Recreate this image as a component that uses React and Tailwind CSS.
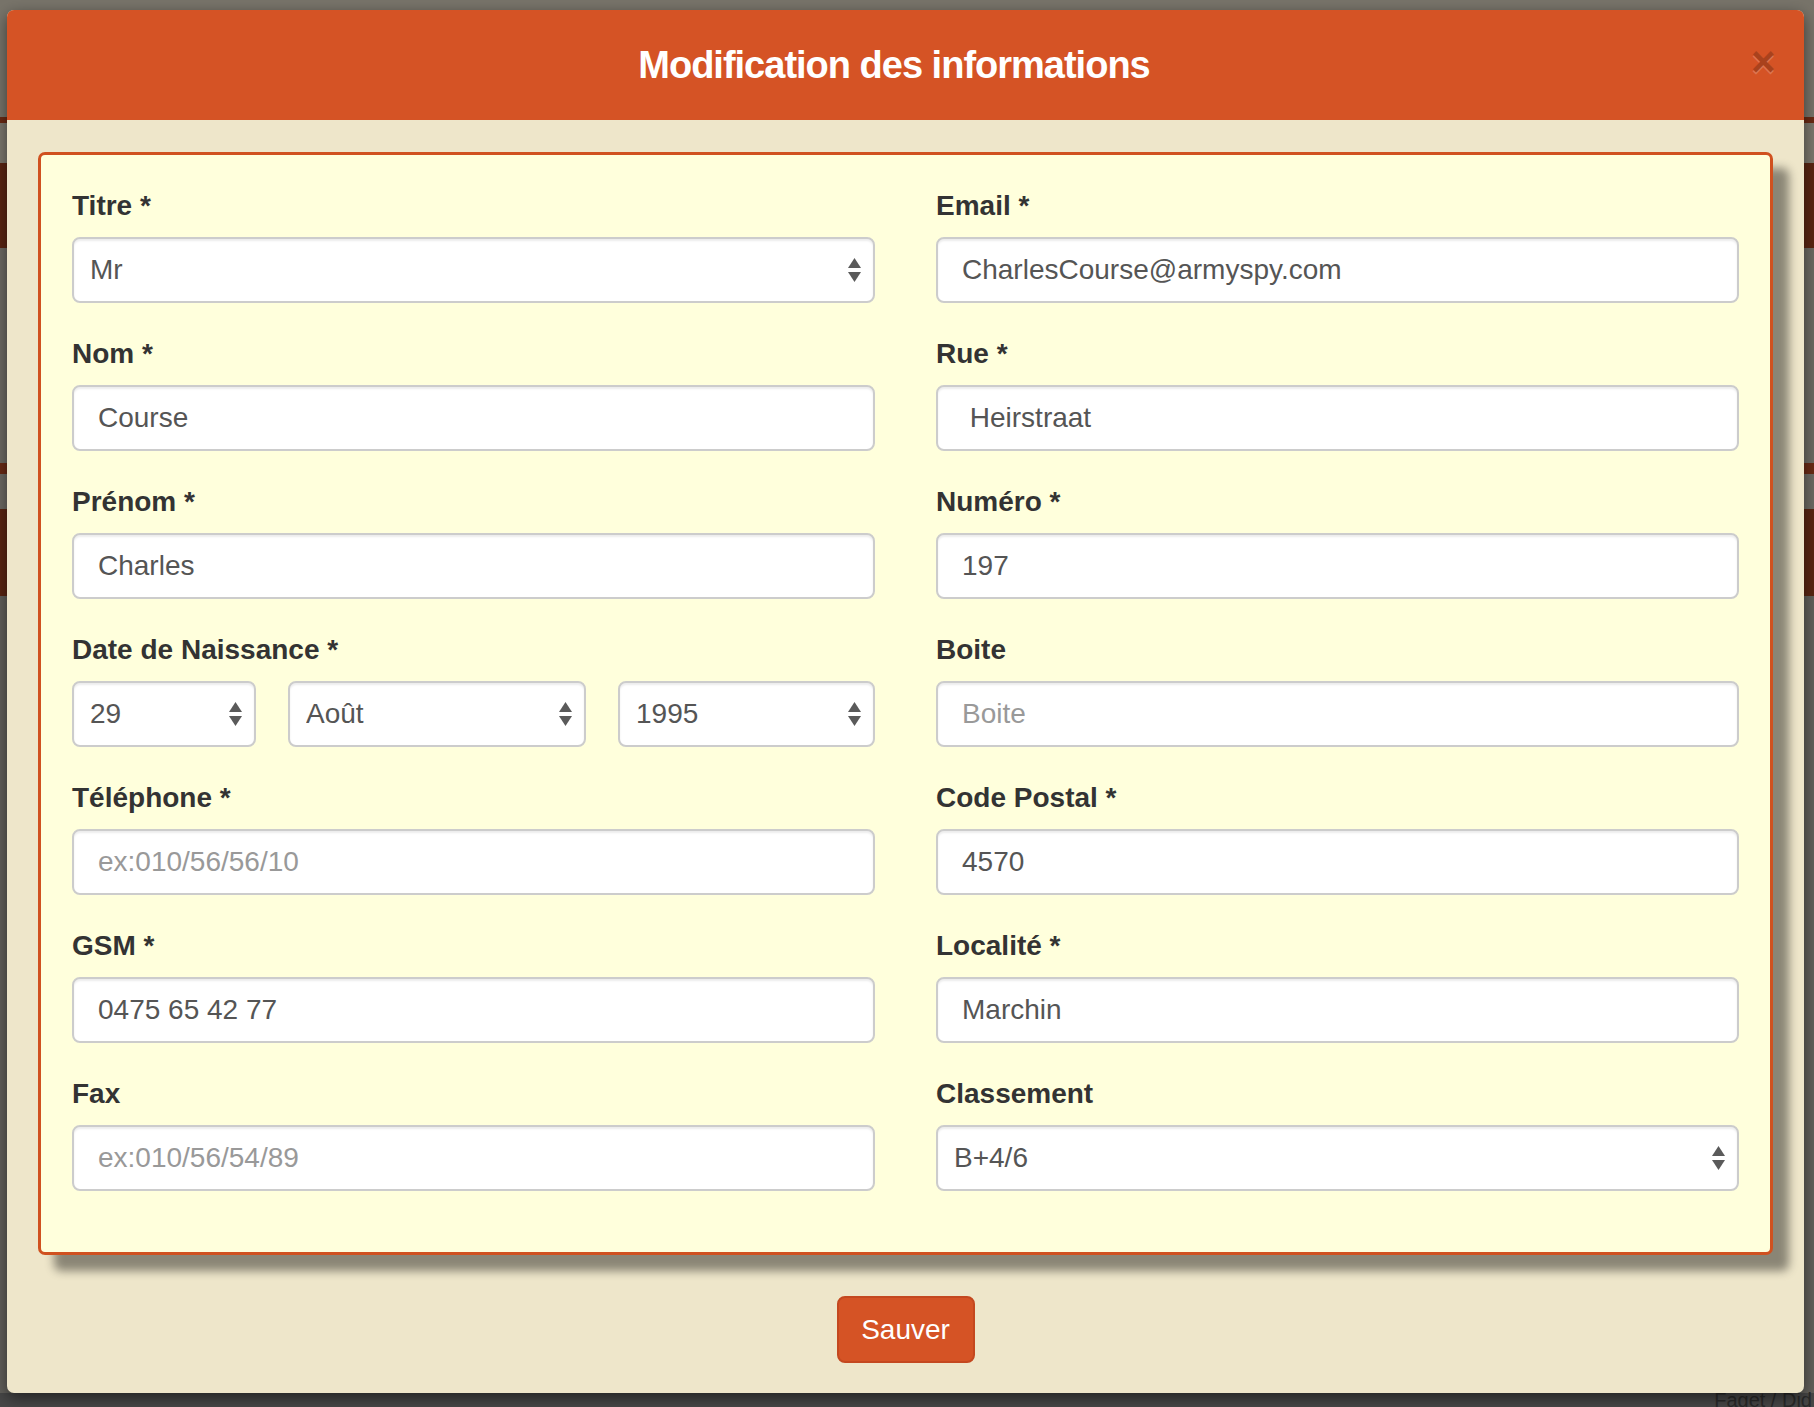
import React from "react";

const Arrows = () => (
  <svg
    className="pointer-events-none absolute right-[14px] top-1/2 -translate-y-1/2"
    width="13"
    height="24"
    viewBox="0 0 13 24"
  >
    <polygon points="0,10 6.5,0 13,10" fill="#5a5a5a" />
    <polygon points="0,14 13,14 6.5,24" fill="#5a5a5a" />
  </svg>
);

const inputCls =
  "w-full h-[66px] rounded-[8px] border-2 border-[#cccccc] bg-white px-[24px] text-[28px] text-[#555555] placeholder:text-[#999999] shadow-[inset_0_2px_2px_rgba(0,0,0,0.075)] outline-none font-['Liberation_Sans',Arial,sans-serif]";

const selectCls =
  "appearance-none w-full h-[66px] rounded-[8px] border-2 border-[#cccccc] bg-white pl-[16px] pr-[40px] text-[28px] text-[#555555] shadow-[inset_0_2px_2px_rgba(0,0,0,0.075)] outline-none font-['Liberation_Sans',Arial,sans-serif]";

const Label = ({ children }) => (
  <label className="block h-[40px] leading-[40px] mb-[11px] text-[28px] font-bold text-[#333333]">
    {children}
  </label>
);

const TextField = ({ label, value, placeholder }) => (
  <div className="mb-[31px]">
    <Label>{label}</Label>
    <input className={inputCls} defaultValue={value} placeholder={placeholder} readOnly />
  </div>
);

const Select = ({ value, className = "" }) => (
  <div className={"relative " + className}>
    <select className={selectCls} defaultValue={value}>
      <option value={value}>{value}</option>
    </select>
    <Arrows />
  </div>
);

const SelectField = ({ label, value }) => (
  <div className="mb-[31px]">
    <Label>{label}</Label>
    <Select value={value} />
  </div>
);

export default function App() {
  return (
    <div className="relative w-[1814px] h-[1407px] overflow-hidden font-['Liberation_Sans',Arial,sans-serif]">
      {/* dimmed page underneath */}
      <div className="flex flex-col h-full">
        <div className="h-[117px] bg-[#78746a]" />
        <div className="h-[6px] bg-[#6b2a14]" />
        <div className="h-[40px] bg-[#7c786d]" />
        <div className="h-[85px] bg-[#5a2512]" />
        <div className="h-[215px] bg-[#6d6a63]" />
        <div className="h-[11px] bg-[#6a2b15]" />
        <div className="h-[35px] bg-[#6d6a63]" />
        <div className="h-[87px] bg-[#5a2512]" />
        <div className="h-[797px] bg-[#62605b]" />
        <div className="flex-1 bg-[#474747] flex justify-end items-start pr-[2px]">
          <span className="text-[20px] leading-[14px] text-[#2a2a2a] whitespace-nowrap">Faget / Did</span>
        </div>
      </div>

      {/* modal */}
      <div className="absolute left-[7px] top-[10px] w-[1797px] rounded-[7px] bg-[#eee6ca] shadow-[0_5px_15px_rgba(0,0,0,0.5)]">
        <div className="flex items-center h-[110px] rounded-t-[7px] bg-[#d55325] pl-[30px] pr-[32px]">
          <h4 className="flex-1 text-center text-white font-bold text-[38px] tracking-[-1px] leading-none">
            Modification des informations
          </h4>
          <button className="w-[21px] text-[42px] leading-none font-bold text-black opacity-20 [text-shadow:0_2px_0_#fff] -mt-[6px]">
            ×
          </button>
        </div>

        <div className="px-[31px] pt-[32px]">
          <div className="rounded-[7px] border-[3px] border-[#d0511f] bg-[#ffffdc] px-[31px] pt-[31px] pb-[30px] shadow-[16px_16px_10px_rgba(0,0,0,0.42)]">
            <div className="grid grid-cols-2 gap-x-[61px]">
              <SelectField label="Titre *" value="Mr" />
              <TextField label="Email *" value="CharlesCourse@armyspy.com" />

              <TextField label="Nom *" value="Course" />
              <TextField label="Rue *" value=" Heirstraat" />

              <TextField label="Prénom *" value="Charles" />
              <TextField label="Numéro *" value="197" />

              <div className="mb-[31px]">
                <Label>Date de Naissance *</Label>
                <div className="flex gap-[32px]">
                  <Select value="29" className="w-[184px]" />
                  <Select value="Août" className="w-[298px]" />
                  <Select value="1995" className="flex-1" />
                </div>
              </div>
              <TextField label="Boite" placeholder="Boite" />

              <TextField label="Téléphone *" placeholder="ex:010/56/56/10" />
              <TextField label="Code Postal *" value="4570" />

              <TextField label="GSM *" value="0475 65 42 77" />
              <TextField label="Localité *" value="Marchin" />

              <TextField label="Fax" placeholder="ex:010/56/54/89" />
              <SelectField label="Classement" value="B+4/6" />
            </div>
          </div>
        </div>

        <div className="flex justify-center pt-[41px] pb-[30px]">
          <button className="w-[138px] h-[67px] rounded-[8px] border-2 border-[#c4481f] bg-[#d55325] text-white text-[28px]">
            Sauver
          </button>
        </div>
      </div>
    </div>
  );
}
